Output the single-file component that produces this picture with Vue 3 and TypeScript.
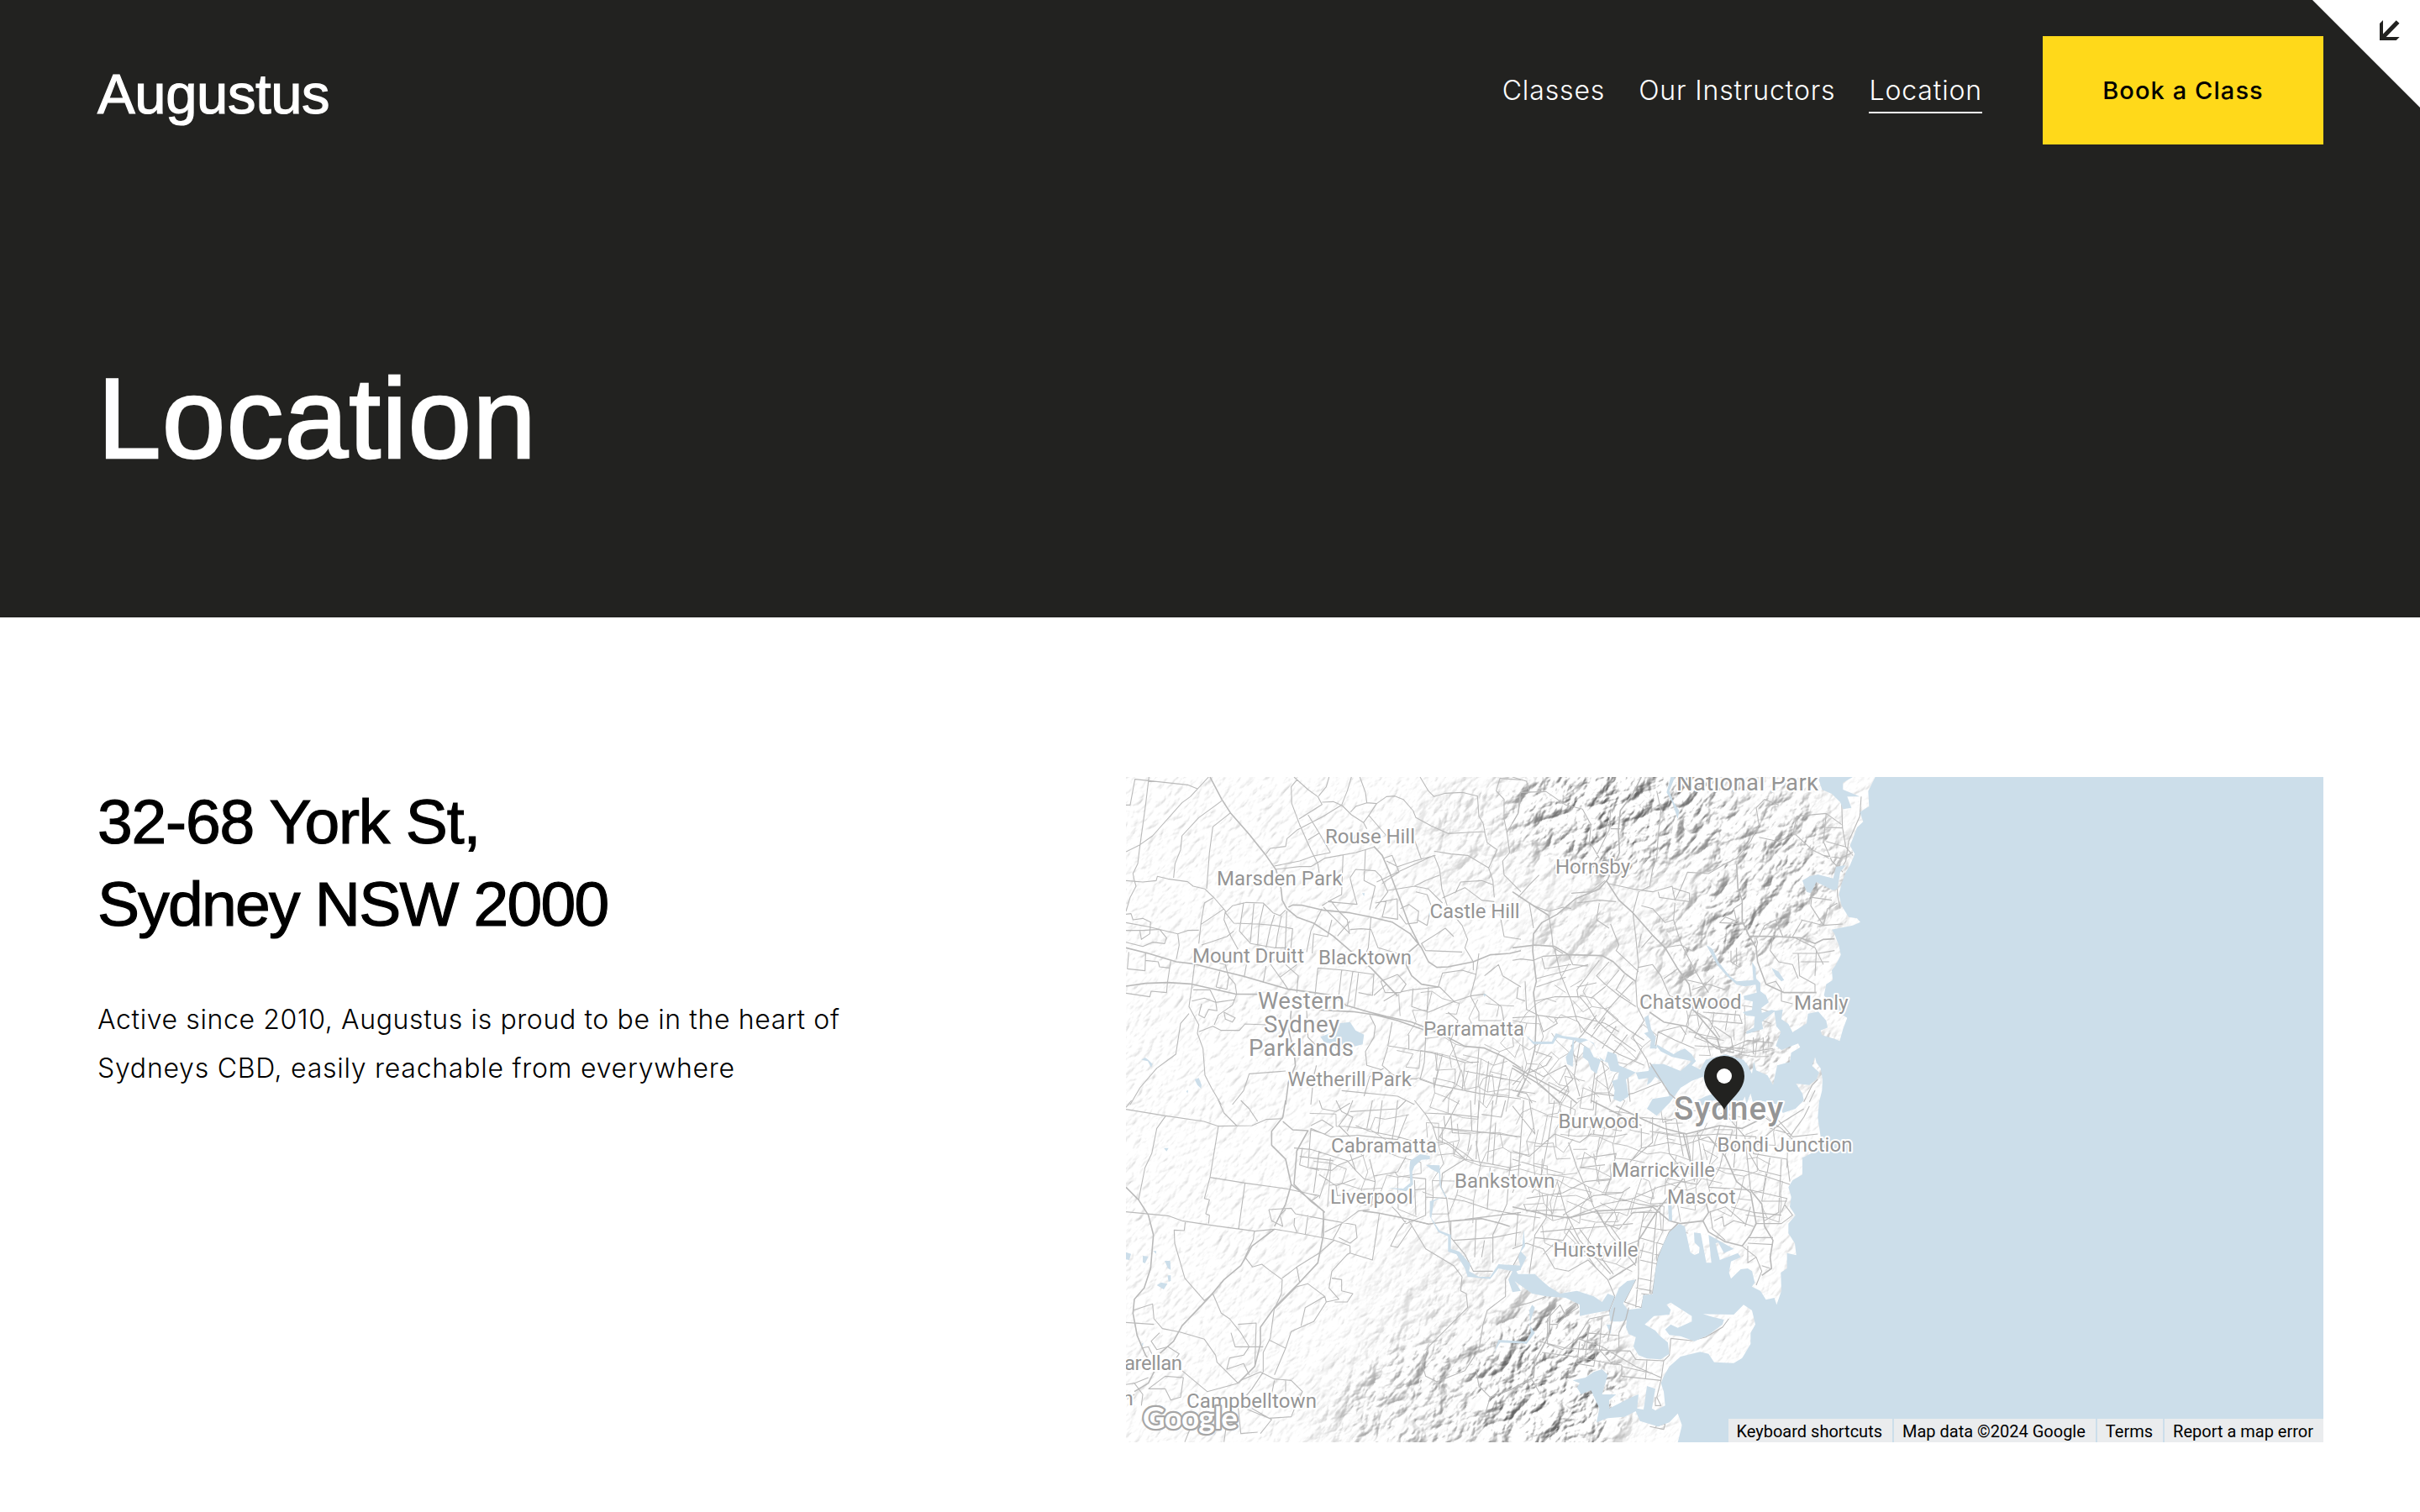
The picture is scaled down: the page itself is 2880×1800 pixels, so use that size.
<script setup lang="ts">
interface Label {
  text: string
  x: number
  y: number
  width: number
  size: number
  weight?: number
}

interface District {
  x: number
  y: number
  cols: number
  rows: number
  step: number
  angle: number
}

interface Tile {
  x: number
  y: number
  major: string[]
  minor: string[]
}

const navItems = ['Classes', 'Our Instructors', 'Location']
const current = 'Location'
const credits = ['Keyboard shortcuts', 'Map data ©2024 Google', 'Terms', 'Report a map error']

const labels: Label[] = [
  { text: 'National Park', x: 655, y: 15.7, width: 169, size: 27.5 },
  { text: 'Rouse Hill', x: 237, y: 79.3, width: 107, size: 24 },
  { text: 'Marsden Park', x: 108, y: 129.3, width: 149.5, size: 24 },
  { text: 'Hornsby', x: 511, y: 115, width: 89, size: 24 },
  { text: 'Castle Hill', x: 361.5, y: 168.3, width: 107, size: 24 },
  { text: 'Mount Druitt', x: 79, y: 220.7, width: 133, size: 24 },
  { text: 'Blacktown', x: 229, y: 223.3, width: 111, size: 24 },
  { text: 'Western', x: 157, y: 275.7, width: 103, size: 27.5 },
  { text: 'Sydney', x: 164, y: 303.5, width: 90, size: 27.5 },
  { text: 'Parklands', x: 146, y: 331.7, width: 125, size: 27.5 },
  { text: 'Parramatta', x: 354, y: 308.3, width: 120, size: 24 },
  { text: 'Wetherill Park', x: 192.500, y: 367.7, width: 147.5, size: 24 },
  { text: 'Chatswood', x: 611, y: 276, width: 121.5, size: 24 },
  { text: 'Manly', x: 795, y: 276.7, width: 64.5, size: 24 },
  { text: 'Sydney', x: 652, y: 408.3, width: 130, size: 38.5, weight: 500 },
  { text: 'Burwood', x: 514.5, y: 417.7, width: 96, size: 24 },
  { text: 'Bondi Junction', x: 703.5, y: 445.7, width: 161, size: 24 },
  { text: 'Marrickville', x: 578, y: 476, width: 123, size: 24 },
  { text: 'Mascot', x: 644, y: 508.3, width: 81.5, size: 24 },
  { text: 'Hurstville', x: 508.5, y: 571, width: 101, size: 24 },
  { text: 'Cabramatta', x: 244, y: 447.3, width: 126, size: 24 },
  { text: 'Liverpool', x: 243, y: 508.3, width: 98.5, size: 24 },
  { text: 'Bankstown', x: 391, y: 489, width: 119.5, size: 24 },
  { text: 'arellan', x: -2, y: 706, width: 69, size: 24 },
  { text: 'n', x: -4.5, y: 748.3, width: 13.5, size: 24 },
  { text: 'Campbelltown', x: 72, y: 751, width: 155, size: 24 },
]

const tiles: Tile[] = [
  {
    x: -10,
    y: -10,
    major: [
      'M330 30L372 110L403 158L470 235L530 310L566 362L584 430L588 470L604 500L640 530L700 552L770 598L830 650L905 712L960 770L1000 812',
      'M610 495L625 487L660 488L730 505L830 515L905 530L980 548L1045 590L1085 640L1110 690L1140 710L1180 708L1270 690L1330 665L1400 660L1440 650',
      'M30 640L110 660L210 690L270 697L370 722L450 742L530 765L610 788L700 800L770 810L815 845L900 870L960 885L1050 905L1100 925L1180 960L1240 992L1310 998L1380 1030L1440 1070',
      'M30 777L100 767L180 764L260 769L340 787L420 805L500 806',
      'M915 278L945 310L975 380L1005 460L1040 555L1075 625L1040 655L1030 700L1050 740L1085 770L1145 780',
      'M660 840L720 862L840 868L920 880L1000 900L1100 935',
      'M620 865L612 940L630 1010L635 1060L610 1120L600 1200',
    ],
    minor: [
      'M30 130L45 130L62 38L250 58L285 72', 'M112 30L100 130L78 290L72 340L55 375L60 400L66 420L45 460L30 510',
      'M30 297L80 272L125 240L230 122L260 100L325 30', 'M372 115L290 175L230 240L225 290L205 340L200 390', 'M403 158L340 208L328 300L318 430',
      'M30 400L90 405L138 400L142 385L180 394L250 404L270 420L312 430L345 462L385 508L380 540L405 600L430 645',
      'M340 462L310 480L298 550L290 625', 'M298 556L378 502', 'M30 550L110 565L215 590L250 578L290 577', 'M30 578L90 578L150 574L175 605L168 625L125 620L90 635L30 620',
      'M215 590L220 630L210 680', 'M30 520L48 518L55 540L90 535L118 548L115 590L85 610L80 580', 'M40 655L35 715L98 722L100 660', 'M100 685L145 690L150 708L185 712',
      'M190 685L178 765L175 800L120 795L115 815L30 802', 'M275 697L265 780L255 850L290 915L285 945L305 1000L312 1095L335 1140L370 1200', 'M255 875L225 910L208 1020L140 1070L80 1140L45 1200',
      'M290 940L340 920L370 935L435 935L455 912L530 915', 'M345 915L360 880L410 845L425 805L420 770L395 740L385 700L340 690',
      'M270 790L330 790L350 830L355 865L325 860L310 890L290 880L300 840', 'M385 515L410 490L460 478L520 480L555 515L580 525L600 505',
      'M385 515L415 552L500 555L560 560L625 572L615 680', 'M415 580L390 600L330 620L300 630', 'M450 478L435 580L475 625L560 640L620 640',
      'M487 482L474 620', 'M522 485L505 560L500 632', 'M560 522L545 570L530 640', 'M585 525L570 600L565 640', 'M604 508L598 650', 'M730 500L690 580L675 655', 'M765 540L750 600L700 590L695 660', 'M830 575L870 572L905 575L930 640L1000 660', 'M905 530L895 640L870 700', 'M735 495L790 550L830 590', 'M760 470L790 510L820 540L828 590', 'M785 598L830 545',
      'M640 40L620 65L622 125L650 200L690 290L715 340L720 372', 'M630 30L680 75L715 100L730 128L680 160L648 180', 'M755 30L745 65L718 98', 'M835 30L820 80L800 130L735 170L640 220L605 250L600 278L545 285L530 305', 'M730 120L770 118L802 132L835 165L878 193', 'M680 165L720 230L760 300', 'M720 230L680 255', 'M560 348L650 330L700 312L760 300', 'M562 360L650 350L690 350L740 320L850 300L918 280', 'M865 30L885 85L890 122L925 125L895 170L878 193L890 215', 'M890 122L850 135L832 155', 'M925 125L960 100L990 98L1020 110L1055 150L1065 175L1120 205L1180 232L1250 228L1310 225L1320 265L1355 290L1325 355L1340 400L1345 460',
      'M898 168L960 240', 'M1080 30L1110 80L1130 100L1170 88L1230 85L1285 98L1290 170L1305 195L1312 230', 'M1440 40L1365 35L1352 80L1380 110L1380 180L1390 228L1430 160L1440 100', 'M1390 228L1400 300L1375 330L1380 380L1440 440', 'M1055 240L1085 325', 'M1130 310L1000 370L925 405', 'M1130 295L1190 305L1250 310L1300 340L1325 355', 'M1130 310L1150 360L1158 430L1180 500L1230 560L1250 610L1240 640L1270 690L1270 720', 'M960 330L1000 350L1060 330L1135 310', 'M805 310L800 450L760 470L730 490', 'M885 290L880 400L920 420L900 505', 'M830 390L850 360L920 365L940 385L965 440L920 500', 'M965 435L1060 420L1100 400L1150 380', 'M945 410L1005 370L980 310L950 320', 'M1060 420L1110 430L1160 480', 'M830 390L840 430L855 485L750 475', 'M1205 445L1225 405L1300 400L1340 415', 'M1160 462L1240 425L1300 470L1345 475', 'M1010 500L1040 485L1075 510L1070 550L1030 555L1005 520', 'M1065 440L1105 450L1120 490L1105 560L1070 540', 'M960 470L945 530L1000 538L998 465L920 480',
      'M715 712L705 810', 'M715 712L810 720L915 735L910 810L860 800', 'M800 720L790 810', 'M840 725L820 850', 'M860 730L845 855', 'M640 700L580 745', 'M540 690L590 760L610 790', 'M600 700L645 740L640 800', 'M460 700L452 745', 'M530 705L520 765', 'M365 725L352 780L390 788L398 740', 'M915 810L960 770', 'M950 830L1000 800L1050 790L1150 780L1205 835', 'M1000 735L940 760L955 800L1010 800L1030 770L1000 735', 'M1055 785L1050 850L1110 870L1205 830', 'M1110 780L1105 865', 'M1205 830L1260 812L1310 805L1370 850L1380 905', 'M1145 780L1160 730L1230 720L1280 735L1290 660', 'M1280 735L1260 812L1290 870L1290 900L1370 900', 'M1310 740L1360 700L1375 740L1440 780', 'M1200 600L1170 570L1140 590L1085 625L1100 650L1230 655', 'M1365 520L1380 600L1440 610',
      'M900 880L920 920L915 960L885 1010L890 1060L940 1075', 'M980 905L965 990L1120 1015L1240 1050L1290 1048', 'M1040 950L1040 1005', 'M1100 960L1095 1050L1080 1110L1140 1130L1290 1160L1440 1180', 'M1185 960L1225 1080L1210 1130L1160 1190', 'M1160 1020L1130 1140', 'M1290 1000L1275 1200', 'M1325 1045L1305 1200', 'M1380 1035L1350 1200', 'M1240 1050L1230 1150', 'M965 995L945 1060L990 1100L1070 1110', 'M1180 870L1215 900L1190 970', 'M1240 1080L1440 1120', 'M675 865L680 960L710 990', 'M800 1150L1000 1170L1060 1200', 'M410 1200L450 1150L470 1090L540 1085L600 1080', 'M710 1060L700 1100L690 1200', 'M880 1170L900 1100L950 1070', 'M380 870L420 890L410 905L385 895L380 870', 'M265 830L310 820L350 835L420 825',
    ],
  },
  {
    x: 460,
    y: -10,
    major: [
      'M460 30L430 90L385 150L378 220L382 300L340 395L310 430L225 465L160 520L105 550L75 590L72 650L85 760L75 800L85 880L80 1000L60 1080L20 1170',
      'M0 640L80 630L150 635L200 665L320 668L360 690L400 730L440 760',
      'M335 400L380 470L430 515L500 595L545 640L590 715L630 770L645 860L730 960L745 1015L790 990',
      'M800 340L805 430L820 470L820 545L845 598L870 640L875 690L905 770L970 800L1085 800',
      'M490 870L540 905L620 920L680 960L730 1000L790 1015',
      'M845 598L950 600L1030 605L1080 625L1110 610L1150 608',
      'M0 1060L110 1120L200 1170L230 1195', 'M0 1070L100 1130L170 1195',
      'M0 440L60 480L130 525',
    ],
    minor: [
      'M0 195L20 160L28 85L120 82L190 130L250 145L280 200L275 260L310 320', 'M350 150L345 220L300 310', 'M515 80L530 150L520 240L515 320L500 360L490 420L450 440L430 515', 'M385 215L350 215', 'M0 30L50 45L60 80', 'M20 460L60 415L95 380', 'M60 480L75 570', 'M130 525L140 590L145 640L180 660', 'M75 490L130 510L180 495L210 500', 'M210 445L280 440L330 400', 'M340 410L430 430L500 440L570 420L580 470L600 430L625 370L700 375L760 340L800 320L850 260L880 200L870 140L900 110L950 130', 'M520 440L525 460L580 468L632 475L632 445L570 425', 'M580 480L575 540L545 550L500 500L460 490', 'M575 540L600 620L640 700L680 770L700 800', 'M430 515L440 600L450 700L440 760L445 850L470 900L430 960L480 1040L495 1090', 'M350 555L380 630L370 650L450 725', 'M310 480L300 540L345 570', 'M230 480L310 470L370 475', 'M880 245L950 260L1000 240L1015 170L1120 160L1175 200', 'M1120 160L1110 260L1140 330L1180 370', 'M1010 235L1070 290L1130 320', 'M1175 110L1178 210L1190 280L1215 310', 'M1110 210L1180 212', 'M1245 100L1240 170L1200 260L1190 330L1160 380L1160 450L1170 500', 'M1110 310L1170 320L1215 300', 'M1120 260L1190 280', 'M1070 440L1065 490L1110 560L1125 500L1160 480', 'M1070 460L1140 470', 'M1035 540L1000 600L1080 640L1110 700', 'M1030 540L1110 560L1180 555', 'M1000 660L1090 660L1150 650', 'M1030 690L1130 690', 'M1020 660L1025 740L1080 770L1080 800', 'M1085 650L1080 740', 'M870 640L875 620L870 605', 'M880 600L900 560L940 540L965 600', 'M930 600L920 650L950 690L1000 700L1020 750', 'M820 480L790 500L800 545L760 530L740 550L830 555', 'M780 650L780 690L810 710', 'M800 640L800 700', 'M905 770L940 760L960 790L960 830L1000 840',
      'M0 685L30 680L75 685L110 670L200 665', 'M105 675L115 715L210 700', 'M85 750L180 725L270 700', 'M85 780L190 745', 'M150 640L170 730L210 830L230 900', 'M200 665L215 700L270 705', 'M310 685L260 750L230 790L235 820', 'M345 690L300 740L330 770L380 810L440 850', 'M380 720L330 780L280 820', 'M400 735L370 790L420 830', 'M430 760L350 850L290 930', 'M230 780L300 765', 'M240 810L290 820L330 860L410 930L470 970', 'M80 830L150 815L240 815L270 850L300 900L370 960L440 1010', 'M85 880L160 890L230 885L330 910L380 940', 'M300 880L250 950L210 990L230 1060', 'M330 890L280 960', 'M370 920L320 1000', 'M410 950L350 1030', 'M230 900L260 940L380 1020L470 1060', 'M45 760L50 860L90 880L110 940L160 910L150 890', 'M0 890L80 885', 'M20 780L15 820L45 830', 'M600 750L690 770L720 740', 'M640 790L700 770L760 790', 'M450 710L500 700L530 740L560 810L600 830L640 820', 'M540 640L600 630L640 650', 'M590 715L540 750', 'M460 590L450 640', 'M500 595L460 640',
      'M640 860L620 920', 'M680 870L810 880L820 910L700 900', 'M720 870L710 930', 'M770 875L760 935', 'M640 860L700 895L740 960', 'M680 900L650 960L730 990L830 1015L930 1000', 'M630 940L740 965', 'M650 990L830 1000', 'M745 1010L840 970L930 980', 'M860 960L860 1020', 'M895 960L895 1015', 'M790 1015L780 960L720 920', 'M520 940L600 920L620 950', 'M510 1000L520 940L580 970L650 1000', 'M80 1010L140 1030L120 1060L50 1090', 'M0 1130L60 1070L110 1100', 'M110 1100L190 1060L215 1110L165 1160', 'M240 980L220 1100L240 1170', 'M300 1040L280 1195', 'M320 1040L350 1190', 'M410 1090L420 1190', 'M230 1180L300 1160L370 1170L430 1160L530 1120', 'M0 1150L50 1160L70 1195', 'M1040 1190L1070 1130L1090 1110', 'M1060 1190L1080 1150',
    ],
  },
  {
    x: -10,
    y: 385,
    major: [
      'M30 310L75 355L110 410L128 480L118 600L95 670L60 710L55 760L70 840L100 910L135 960L110 1010L60 1040',
      'M560 460L480 520L440 590L380 640L330 700L230 805L200 860L150 905',
      'M600 0L590 60L550 110L550 160L600 210L620 300L600 370L560 450',
      'M590 75L625 105L680 108L640 180L630 300L690 360L735 395L735 480L715 580L650 650L560 740L510 810L510 870L490 950L430 1010',
      'M875 395L930 402L1020 420L1110 442L1200 430L1300 422L1370 440L1400 450',
      'M620 300L700 365L740 400',
    ],
    minor: [
      'M30 32L172 55L308 75L360 92L480 90L530 68L590 65', 'M172 55L140 100L122 190L98 240L75 355', 'M360 92L330 275L310 350L328 355L315 405L328 410L325 440', 'M330 275L455 295L600 315L680 332L710 340', 'M455 295L432 460', 'M30 398L180 412L230 430L350 448L490 467L560 460', 'M242 432L238 465L202 463L204 510L240 635L310 715L340 690', 'M488 467L485 495L455 560L482 595L515 585L540 605L588 640L585 690L560 745', 'M560 460L650 475L770 498L830 520L830 545L910 570L935 402', 'M340 690L370 760L400 780L440 830L470 880L520 880', 'M360 0L380 45L425 90', 'M440 0L470 30L500 75', 'M30 25L50 0', 'M55 750L125 727L130 780L160 815L225 828L310 853L350 910L355 935L430 1010L320 1040L230 965', 'M30 793L130 800', 'M150 830L120 860L140 890L180 880L220 905L195 940', 'M85 885L110 880L130 920L110 950', 'M110 1030L170 985L235 990L225 1060L190 1070L170 1030L110 1030', 'M30 1015L60 1010L110 990', 'M60 1010L90 1050L85 1090', 'M30 1070L60 1050',
      'M430 800L495 795L490 950', 'M405 830L420 880L470 880L450 910L400 920L390 960L450 940L470 980', 'M440 1000L510 970L560 995L620 1000L660 1040L640 1080L620 1130', 'M560 740L545 850L520 900L520 970L480 1030L430 1090', 'M540 855L600 885L560 980', 'M600 885L620 825L700 790L745 720L740 700L680 655L640 665L560 745', 'M655 805L670 740L740 700', 'M745 720L790 710L755 670L765 610L820 550L830 545', 'M765 635L800 640L800 680L840 690L820 720L775 720', 'M588 635L640 595L720 545L775 498', 'M640 595L650 650', 'M540 390L620 385L635 405L740 425L850 445L855 490L830 510L790 490', 'M540 390L550 430L590 450L580 410L600 390', 'M632 420L630 445L640 470', 'M680 410L670 480', 'M735 425L728 490', 'M770 495L800 440L860 395L900 390', 'M740 470L800 440', 'M630 170L690 175L820 215L850 250L880 280L920 290L915 270L1000 255L1030 200', 'M690 100L680 240L765 250L790 230L880 195', 'M660 170L650 230L680 240L720 250', 'M720 180L700 330', 'M760 205L755 245L720 350', 'M650 200L770 215', 'M690 100L760 130L860 125L1000 140', 'M690 90L730 70L770 95L740 120L690 105', 'M720 0L730 30L780 40L830 10', 'M780 0L800 40L840 60L820 110', 'M840 0L820 50L790 90L830 130', 'M910 0L890 100', 'M945 0L930 120', 'M830 40L1000 30L1030 0', 'M850 90L900 110L1000 130L1070 150', 'M1060 0L1100 50L1125 90L1140 140L1185 160L1240 210L1160 260L1155 310L1175 350L1180 400L1190 490L1240 550L1270 610L1340 610', 'M1000 0L990 90L980 140', 'M1035 50L1000 140', 'M1220 0L1150 130L1240 190L1270 215', 'M1095 45L1200 50L1290 60', 'M1125 95L1270 110L1440 130', 'M1165 55L1170 100', 'M1190 50L1195 115L1260 120L1250 180', 'M1260 0L1265 110', 'M1290 0L1280 210', 'M1340 0L1320 220', 'M1385 0L1370 60L1300 50', 'M1350 80L1340 230', 'M1240 210L1400 240L1440 230', 'M1180 350L1240 360L1330 390L1440 410', 'M1330 240L1320 390', 'M1400 240L1390 370L1340 480L1340 580', 'M1175 350L1100 345L1100 410L1030 440L1000 400L980 380', 'M1110 442L1040 425', 'M990 255L1000 270L1100 280L1100 345', 'M1060 285L1065 410', 'M1060 320L1100 315', 'M900 210L920 290L905 380', 'M830 190L850 250', 'M720 265L780 305L850 280', 'M780 305L785 340L910 330', 'M690 360L720 340L690 335', 'M1030 430L1000 470L975 520L1000 525L1030 480L1050 450', 'M1040 430L1100 530L1200 590L1230 630L1225 680L1245 690L1250 740L1110 880L1087 940L1100 985L1140 1005L1240 965L1290 890L1305 800L1320 750L1385 700L1385 640L1440 540', 'M1190 430L1190 490', 'M1280 425L1275 560', 'M1310 500L1300 560', 'M1200 500L1340 490L1440 470', 'M1240 425L1440 400', 'M1440 1020L1330 1060L1290 1020L1280 960', 'M1310 1130L1330 1060', 'M430 1090L440 1190L500 1185', 'M480 1100L550 1140L510 1190', 'M560 1000L550 1050', 'M600 1000L600 1040', 'M620 1130L540 1135L430 1090', 'M240 1220L260 1170L300 1130', 'M380 1220L390 1150',
    ],
  },
  {
    x: 460,
    y: 385,
    major: [
      'M365 700L345 750L350 765', 'M0 1030L75 990L80 930L130 840L135 750',
      'M0 380L130 410L200 420L300 395L400 390L500 380L560 430L600 440L680 430L700 400L690 360L600 330',
      'M680 430L700 470L760 505L820 520L850 480L870 440L850 330L800 290L760 200L700 130',
      'M370 20L470 70L540 100L620 120L740 90L820 100L900 60', 'M345 640L440 580L450 500L520 390L600 290L640 240L610 120',
      'M850 320L890 370L900 450L930 500L920 560L925 600L890 625',
      'M500 690L520 560L560 470L590 440', 'M280 0L400 60L460 90',
    ],
    minor: [
      'M0 20L80 120L60 0', 'M0 180L60 200L150 120L240 150L280 120L360 130L410 120', 'M0 210L100 240L180 260', 'M40 0L30 130L20 280L0 330', 'M150 0L130 130L100 280L70 330', 'M210 0L200 130', 'M300 0L290 120', 'M200 150L230 240L290 380L350 480L440 590', 'M160 290L190 400L240 500L350 620', 'M50 350L180 330L260 290L350 280', 'M40 370L50 395L190 390', 'M230 210L370 190L350 280L330 340', 'M290 190L310 300', 'M240 240L330 230', 'M125 340L120 420L80 480L60 620', 'M100 470L200 460L330 450L430 440', 'M80 490L180 500L210 450', 'M200 460L300 600', 'M240 460L360 620', 'M350 450L400 520L450 500', 'M300 390L350 480', 'M180 410L290 340L390 330L420 310', 'M200 420L330 370L430 350L520 310L600 290', 'M380 350L450 370L520 380', 'M360 400L330 440L380 460L430 400L520 400', 'M0 530L50 510L110 530L150 600L200 610L270 570L340 640L365 700', 'M110 550L160 500L260 540', 'M0 405L100 420', 'M20 400L10 520', 'M470 400L450 500L450 620L440 740', 'M515 400L500 560L490 690', 'M460 450L550 465', 'M450 490L540 515', 'M455 535L530 555', 'M455 570L520 585', 'M450 635L500 645', 'M440 670L495 680L495 695L460 690', 'M440 640L400 720L460 740L470 690', 'M380 830L380 885',
      'M460 100L460 170L420 220', 'M500 60L500 150L430 210', 'M545 60L560 190L600 240', 'M580 40L610 200', 'M450 60L570 70', 'M490 110L600 130L740 120L870 130', 'M460 170L560 150L610 160L700 130', 'M620 120L650 290', 'M660 110L680 240', 'M740 90L700 240L660 300L600 290', 'M760 150L740 240L700 310', 'M800 110L790 240', 'M830 130L850 320', 'M870 130L860 190L980 210L990 290', 'M730 240L820 250L900 270L990 300', 'M700 310L850 320L980 350L960 400', 'M840 180L880 250L960 270', 'M920 200L890 360', 'M960 210L950 400L900 430', 'M890 360L980 360', 'M700 400L760 380L830 440L860 450', 'M705 395L715 460L760 500', 'M720 430L750 415L755 450L790 430L830 440', 'M870 440L960 440L1000 410L970 370', 'M840 490L930 490', 'M840 510L930 515', 'M820 520L870 560L840 580L840 520', 'M870 560L890 610L870 660', 'M890 590L920 600', 'M780 380L860 400L960 410', 'M850 380L830 450', 'M900 60L960 100L1000 140', 'M900 130L960 80L1040 30', 'M990 130L1040 60L1060 20', 'M920 100L990 120', 'M940 60L1000 130', 'M1000 130L1090 120', 'M800 20L800 150', 'M770 60L830 130',
      'M95 860L190 885L270 890L420 895L440 925L540 930', 'M105 900L220 915L350 940L390 945', 'M240 860L230 940L290 950L300 890', 'M275 800L260 910', 'M320 770L310 890L350 935', 'M260 830L380 840', 'M230 850L320 880L370 910L440 950L530 990', 'M125 780L125 870L180 890L230 850L275 780L350 765', 'M125 780L170 730L190 770L160 800L130 800', 'M190 750L230 720L235 740L190 770', 'M390 945L390 985L530 1000L540 930', 'M480 925L475 995', 'M390 950L500 975', 'M530 1000L515 1060L530 1090L510 1090L510 1060', 'M565 850L560 910L540 930', 'M565 850L640 858L690 845L750 810L772 780', 'M0 740L70 720L120 700', 'M65 990L100 1050', 'M510 1165L545 1155L540 1175L490 1165', 'M110 1220L160 1170',
    ],
  },
]

const districts: District[] = [
  { x: 330, y: 255, cols: 10, rows: 6, step: 17, angle: 8 },
  { x: 375, y: 330, cols: 13, rows: 7, step: 17, angle: 9 },
  { x: 500, y: 385, cols: 11, rows: 7, step: 18, angle: 11 },
  { x: 640, y: 390, cols: 9, rows: 7, step: 17, angle: 8 },
  { x: 225, y: 395, cols: 9, rows: 5, step: 22, angle: 6 },
  { x: 530, y: 225, cols: 8, rows: 8, step: 16, angle: 41 },
  { x: 670, y: 270, cols: 7, rows: 4, step: 14, angle: 5 },
  { x: 495, y: 480, cols: 8, rows: 4, step: 19, angle: 14 },
]

/* Deterministic noise so that the street blocks are the same on every load. */
function createRandom(seed: number): () => number {
  let state = seed
  return () => {
    state = (state * 16807) % 2147483647
    return state / 2147483647
  }
}

function streetBlocks(d: District, seed: number): string {
  const random = createRandom(seed)
  const angle = (d.angle * Math.PI) / 180
  const nodes: string[][] = []
  for (let r = 0; r <= d.rows; r++) {
    const row: string[] = []
    for (let c = 0; c <= d.cols; c++) {
      const u = c * d.step + (random() - 0.5) * d.step * 0.6
      const v = r * d.step + (random() - 0.5) * d.step * 0.6
      const x = d.x + u * Math.cos(angle) - v * Math.sin(angle)
      const y = d.y + u * Math.sin(angle) + v * Math.cos(angle)
      row.push(`${x.toFixed(1)} ${y.toFixed(1)}`)
    }
    nodes.push(row)
  }
  let path = ''
  for (let r = 0; r <= d.rows; r++) {
    for (let c = 0; c <= d.cols; c++) {
      if (c < d.cols && random() > 0.5) path += `M${nodes[r][c]}L${nodes[r][c + 1]}`
      if (r < d.rows && random() > 0.5) path += `M${nodes[r][c]}L${nodes[r + 1][c]}`
    }
  }
  return path
}

const streets = districts.map((d, i) => streetBlocks(d, 4211 + i * 977))
</script>

<template>
  <div class="page">
    <section class="hero">
      <header class="bar">
        <a class="brand">Augustus</a>
        <nav class="nav">
          <a v-for="item in navItems" :key="item" :class="['link', { active: item === current }]">{{ item }}</a>
        </nav>
        <a class="button">Book a Class</a>
      </header>
      <h1 class="title">Location</h1>
      <svg class="corner" viewBox="0 0 128 128">
        <path d="M0 0H128V128Z" fill="#fff" />
        <path d="M80 28 84 24V40.500L99.700 24.300 103.500 27.700 87.700 44H103.700L99.700 48H80Z" fill="#222220" />
      </svg>
    </section>

    <main class="content">
      <div class="info">
        <h2 class="address"><span class="address-one">32-68 York St,</span><br /><span>Sydney NSW 2000</span></h2>
        <p class="text">
          <span class="line-one">Active since 2010, Augustus is proud to be in the heart of</span><br />
          <span class="line-two">Sydneys CBD, easily reachable from everywhere</span>
        </p>
      </div>

      <div class="map">
        <svg class="map-canvas" viewBox="0 0 1425 792">
          <defs>
            <filter id="relief" x="0" y="0" width="100%" height="100%" color-interpolation-filters="sRGB">
              <feTurbulence type="turbulence" baseFrequency="0.019 0.03" numOctaves="4" seed="8" />
              <feColorMatrix values="0 0 0 0 0  0 0 0 0 0  0 0 0 0 0  0.9 0.9 0 0 0" />
              <feDiffuseLighting surfaceScale="9" diffuseConstant="1.24" lighting-color="#fff">
                <feDistantLight azimuth="270" elevation="58" />
              </feDiffuseLighting>
              <feComponentTransfer>
                <feFuncR type="linear" slope="0.66" intercept="0.36" />
                <feFuncG type="linear" slope="0.66" intercept="0.36" />
                <feFuncB type="linear" slope="0.66" intercept="0.36" />
              </feComponentTransfer>
            </filter>
            <filter id="grain" x="0" y="0" width="100%" height="100%" color-interpolation-filters="sRGB">
              <feTurbulence type="turbulence" baseFrequency="0.045 0.08" numOctaves="3" seed="3" />
              <feColorMatrix values="0 0 0 0 0  0 0 0 0 0  0 0 0 0 0  0.9 0.9 0 0 0" />
              <feDiffuseLighting surfaceScale="1.4" diffuseConstant="1.24" lighting-color="#fff">
                <feDistantLight azimuth="270" elevation="58" />
              </feDiffuseLighting>
            </filter>
            <radialGradient id="fade">
              <stop offset="0" stop-color="#fff" />
              <stop offset="0.6" stop-color="#fff" stop-opacity="0.8" />
              <stop offset="1" stop-color="#fff" stop-opacity="0" />
            </radialGradient>
            <mask id="hills">
              <ellipse cx="590" cy="30" rx="160" ry="115" fill="url(#fade)" />
              <ellipse cx="770" cy="110" rx="110" ry="130" fill="url(#fade)" opacity="0.75" />
              <ellipse cx="690" cy="200" rx="90" ry="80" fill="url(#fade)" opacity="0.6" />
              <ellipse cx="430" cy="70" rx="110" ry="90" fill="url(#fade)" opacity="0.3" />
              <ellipse cx="540" cy="180" rx="80" ry="60" fill="url(#fade)" opacity="0.35" />
              <ellipse cx="400" cy="760" rx="200" ry="120" fill="url(#fade)" opacity="0.65" />
              <ellipse cx="510" cy="730" rx="110" ry="130" fill="url(#fade)" />
              <ellipse cx="400" cy="640" rx="140" ry="110" fill="url(#fade)" opacity="0.25" />
              <ellipse cx="780" cy="330" rx="90" ry="50" fill="url(#fade)" opacity="0.5" />
            </mask>
          </defs>

          <rect width="1425" height="792" fill="#fff" />
          <g transform="rotate(-48 450 396)">
            <rect x="-200" y="-270" width="1300" height="1340" filter="url(#grain)" opacity="0.27" />
          </g>
          <g mask="url(#hills)">
            <g transform="rotate(-48 450 396)">
              <rect x="-200" y="-270" width="1300" height="1340" filter="url(#relief)" />
            </g>
          </g>

          <g class="streets">
            <path v-for="(d, i) in streets" :key="i" :d="d" />
          </g>
          <g v-for="(tile, i) in tiles" :key="i" :transform="`translate(${tile.x} ${tile.y}) scale(0.33333)`" class="roads">
            <path :d="tile.minor.join('')" class="minor" />
            <path :d="tile.major.join('')" class="major" />
          </g>

          <g fill="#ccdeea">
            <g transform="translate(-10 -10) scale(0.33333)">
              <path d="M724 958L760 945L790 910L830 905L850 935L880 950L875 985L845 992L825 975L800 1010L780 1005L770 980L740 980Z" />
              <path d="M85 1040L98 1032L110 1040L125 1055L120 1068L108 1045ZM275 1110L290 1105L300 1130L298 1142L285 1130ZM873 445L882 445L880 456ZM1305 805L1318 806L1310 815ZM245 1152L252 1148L250 1160Z" />
            </g>
            <g transform="translate(460 -10) scale(0.33333)">
              <path d="M1295 30L1280 60L1270 80L1273 135L1240 155L1252 190L1230 210L1215 250L1205 275L1222 305L1205 345L1190 370L1175 410L1165 450L1175 490L1200 530L1230 535L1242 548L1215 560L1180 567L1140 575L1150 590L1155 605L1165 630L1172 665L1155 700L1140 720L1143 755L1120 770L1112 810L1130 830L1155 865L1195 890L1180 930L1168 973L1150 965L1105 952L1100 935L1125 925L1120 900L1092 868L1055 875L1050 910L1000 942L985 912L960 895L965 860L940 865L925 862L890 872L888 855L915 835L905 810L885 795L885 765L870 750L868 710L855 690L860 755L800 760L775 740L735 690L715 645L692 630L730 700L760 735L800 772L830 778L868 772L872 800L825 812L828 825L858 832L855 862L822 870L835 882L865 885L862 925L835 938L835 948L895 930L890 905L935 868L942 920L958 940L940 990L960 1005L1020 982L1027 995L995 1015L990 1048L945 1060L930 1130L910 1095L870 1078L862 1045L855 1090L840 1060L825 1040L760 1020L690 1040L670 1075L640 1060L655 1045L640 1020L615 1000L590 1010L575 1020L540 1000L515 985L515 1000L490 1000L495 970L470 945L485 940L470 890L485 880L495 930L512 960L508 985L530 1010L570 1030L640 1045L600 1080L540 1055L495 1055L485 1080L440 1085L380 1060L370 1020L340 1010L330 1045L310 1030L290 985L270 970L240 980L220 970L215 1065L195 1055L190 1030L210 1000L215 970L160 960L145 983L75 985L45 950L75 975L140 975L155 945L180 955L260 965L290 980L305 1020L315 1040L300 1090L280 1075L270 1045L250 1030L255 990L275 1000L290 1030L315 1040L340 1050L350 1080L380 1085L375 1110L355 1115L365 1150L360 1180L385 1190L415 1170L405 1110L440 1085L450 1110L485 1105L480 1130L495 1120L510 1100L545 1130L560 1170L500 1180L480 1215L515 1240L560 1195L600 1140L640 1115L680 1100L690 1130L720 1160L690 1170L650 1190L655 1215L700 1190L740 1180L760 1230L820 1190L830 1170L835 1200L850 1160L860 1200L880 1185L950 1200L965 1230L1010 1215L1040 1185L1035 1160L1012 1125L1060 1130L1085 1110L1095 1085L1070 1062L1080 1030L1085 1050L1100 1070L1107 1110L1105 1150L1095 1190H2900V30Z" />
              <path d="M1090 30L1105 75L1140 90L1170 120L1180 145L1210 140L1195 100L1240 100L1180 75L1180 50L1215 30ZM1035 400L1060 385L1090 378L1145 392L1155 350L1190 345L1170 370L1160 430L1145 435L1085 405L1065 445L1050 440ZM565 30L580 30L560 80L575 120L595 150L590 180L570 120L550 85ZM925 712L950 725L970 755L960 760L940 740ZM590 1105L610 1095L620 1108Z" />
            </g>
            <g transform="translate(-10 385) scale(0.33333)">
              <path d="M1042 240L1045 215L1080 192L1115 198L1115 210L1085 212L1060 235L1052 255L1055 300L1045 310L1030 325L965 312L1020 315L1045 295ZM1100 230L1150 232L1155 310L1175 345L1170 345L1150 305L1148 260L1120 245Z" />
              <path d="M1115 360L1160 345L1130 360L1120 420L1150 465L1190 480L1190 530L1220 540L1260 585L1255 610L1290 630L1330 630L1360 585L1440 590L1440 605L1425 610L1415 640L1440 680L1410 685L1395 640L1410 610L1360 600L1330 638L1250 630L1240 600L1210 550L1180 540L1180 485L1145 470L1115 415Z" />
              <path d="M30 542L48 548L42 570L30 568ZM90 555L110 557L98 582L90 578ZM168 573L188 573L190 605L180 600ZM178 625H190V645L182 648ZM140 660L155 650L178 655L165 675ZM165 170L182 170L175 182ZM127 538H138V548ZM85 870L92 865L90 880ZM1345 900L1360 855L1440 860V868L1365 865Z" />
            </g>
            <g transform="translate(460 385) scale(0.33333)">
              <path d="M1095 0L1090 60L1100 130L1085 180L1035 205L1035 265L1000 285L985 310L995 345L990 380L1010 410L985 440L985 475L1008 510L1013 553L980 545L980 600L958 615L960 680L943 730L935 705L905 712L885 680L855 665L865 650L855 610L840 600L815 603L780 637L773 615L780 575L815 560L805 545L740 570L725 510L735 508L755 545L790 530L700 480L710 580L692 580L672 475L648 472L650 508L668 525L666 545L650 552L635 543L615 450L595 440L560 470L540 510L520 560L510 610L500 692L467 695L460 742L412 748L395 725L420 680L440 640L410 645L380 670L372 690L345 758L350 790L385 790L408 785L405 810L415 835L440 845L432 880L450 910L480 922L530 925L560 905L555 865L525 840L510 822L472 800L505 770L560 765L565 748L550 730L565 722L640 770L640 790L590 812L565 800L545 818L560 838L600 842L650 860L700 838L750 800L755 783L720 775L680 763L790 765L825 730L855 750L867 800L850 830L850 870L820 920L790 938L720 935L700 905L670 898L600 915L560 950L540 985L530 1010L540 1040L545 1090L510 1107L498 1100L510 1030L480 1020L468 1105L445 1100L450 1050L425 1060L345 1100L345 1070L370 1050L320 1050L340 980L320 960L290 970L260 990L215 1000L240 1010L230 1025L245 1050L280 1035L310 1100L300 1150L340 1135L400 1130L440 1110L455 1145L520 1165L560 1150L590 1118L605 1160L590 1222L585 1240H2900V0Z" />
              <path d="M0 590L20 620L80 620L100 640L130 665L170 690L230 680L290 700L320 720L340 690L365 700L345 750L290 760L240 770L240 730L190 705L120 700L70 690L0 640ZM40 460L45 520L30 540L50 560L30 600L20 560L35 520ZM60 750L70 730L80 740L60 800L80 830L50 870L0 860L50 860L65 830ZM555 360L568 350L570 430L558 430ZM335 800L355 800L350 835Z" />
            </g>
          </g>
          <path class="bridge" d="M581.700 631.700L573.300 671.700M598.300 631.700L595 645L586.700 661.700M623.300 340L646.700 376.700L660 388.300" />

          <g class="labels">
            <text v-for="(l, i) in labels" :key="i" :x="l.x" :y="l.y" :textLength="l.width" :font-size="l.size" :font-weight="l.weight ?? 400">{{ l.text }}</text>
          </g>
          <text class="mark" x="20" y="776" textLength="113" font-size="37">Google</text>
          <path d="M712 396C706 384 688 374 688 356A24 24 0 1 1 736 356C736 374 718 384 712 396Z" fill="#222220" />
          <circle cx="712" cy="356" r="9" fill="#fff" />
        </svg>
        <div class="credits">
          <span v-for="credit in credits" :key="credit" class="credit">{{ credit }}</span>
        </div>
      </div>
    </main>
  </div>
</template>

<style>
body {
  margin: 0;
  background: #fff;
}
</style>

<style scoped>
.page {
  width: 2880px;
  height: 1800px;
  overflow: hidden;
  background: #fff;
  color: #000;
}

.hero {
  position: relative;
  box-sizing: border-box;
  height: 735px;
  padding: 43px 115px 0 116px;
  background: #222220;
  color: #fff;
}

.bar {
  display: flex;
  align-items: center;
  height: 129px;
}

.brand {
  margin-right: auto;
  padding-top: 9px;
  font: 400 67px/80px "Liberation Sans", sans-serif;
  letter-spacing: -0.4px;
  -webkit-text-stroke: 1.2px #fff;
}

.nav {
  display: flex;
  gap: 40px;
  margin-right: 72px;
}

.link {
  padding: 4px 0 1px;
  border-bottom: 2px solid transparent;
  font: 300 32px/48px Inter, sans-serif;
  letter-spacing: 0.86px;
}

.link.active {
  border-color: #fff;
}

.button {
  display: flex;
  align-items: center;
  justify-content: center;
  width: 334px;
  height: 129px;
  background: #ffd91a;
  color: #000;
  font: 500 29px/40px Inter, sans-serif;
  letter-spacing: 1.1px;
}

.title {
  margin: 248px 0 0;
  font: 400 136px/156px "Liberation Sans", sans-serif;
  letter-spacing: 1.1px;
  -webkit-text-stroke: 2.4px #fff;
}

.corner {
  position: absolute;
  top: 0;
  right: 0;
  width: 128px;
  height: 128px;
}

.content {
  display: flex;
  justify-content: space-between;
  padding: 190px 115px 0 116px;
}

.info {
  padding-top: 4px;
}

.address {
  margin: 0;
  font: 400 75px/98px "Liberation Sans", sans-serif;
  letter-spacing: -1.75px;
  -webkit-text-stroke: 1.2px #000;
}

.address-one {
  letter-spacing: -1.15px;
}

.text {
  margin: 60px 0 0;
  font: 300 32px/58px Inter, sans-serif;
}

.line-one {
  letter-spacing: 0.62px;
}

.line-two {
  letter-spacing: 0.74px;
}

.map {
  position: relative;
  width: 1425px;
  height: 792px;
  overflow: hidden;
}

.map-canvas {
  display: block;
  width: 1425px;
  height: 792px;
}

.streets path,
.roads path,
.bridge {
  fill: none;
  stroke: #bababa;
  stroke-linejoin: round;
}

.streets path {
  stroke-width: 0.9;
}

.roads .minor {
  stroke-width: 3.3;
}

.roads .major {
  stroke-width: 4.8;
}

.bridge {
  stroke-width: 1.300;
}

.labels text {
  fill: #959595;
  stroke: #fff;
  stroke-width: 4px;
  stroke-linejoin: round;
  paint-order: stroke;
  font-family: Roboto, sans-serif;
}

.mark {
  fill: #fff;
  stroke: #a6a6a6;
  stroke-width: 4.5px;
  stroke-linejoin: round;
  paint-order: stroke;
  font-family: Lato, sans-serif;
  font-weight: 700;
}

.credits {
  position: absolute;
  right: 0;
  bottom: 0;
  display: flex;
  gap: 2px;
  height: 28px;
}

.credit {
  padding: 0 12px 0 10px;
  background: #eaecee;
  font: 400 20px/30px Roboto, sans-serif;
  white-space: nowrap;
}
</style>
